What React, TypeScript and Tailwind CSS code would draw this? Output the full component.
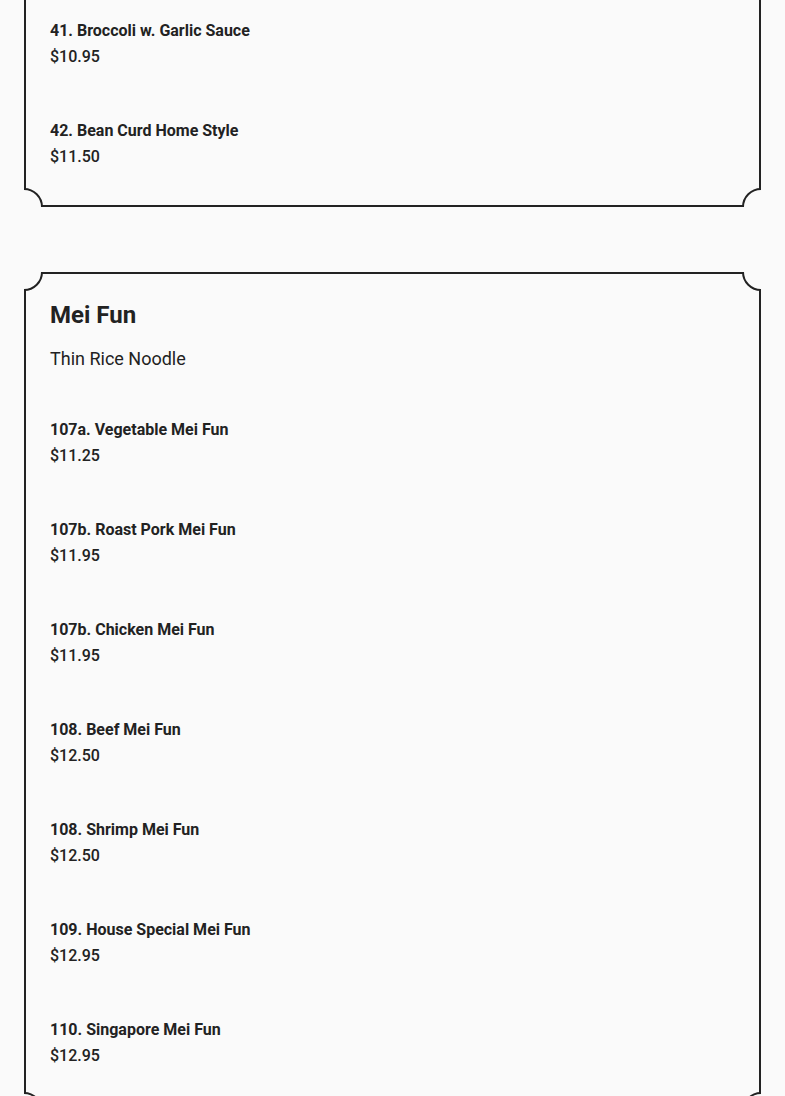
import React from "react";

type Item = { name: string; price: string };

const Corner = ({ pos }: { pos: "tl" | "tr" | "bl" | "br" }) => {
  const cls =
    pos === "tl"
      ? "-left-[19px] -top-[19px]"
      : pos === "tr"
      ? "-right-[19px] -top-[19px]"
      : pos === "bl"
      ? "-left-[19px] -bottom-[19px]"
      : "-right-[19px] -bottom-[19px]";
  return (
    <div
      className={`absolute ${cls} h-[38px] w-[38px] rounded-full border-2 border-[#222222] bg-[#fafafa]`}
    />
  );
};

const ItemRow = ({ item }: { item: Item }) => (
  <div className="flex flex-col">
    <div className="text-[16px] leading-[26px] font-bold text-[#222222]">{item.name}</div>
    <div className="text-[16px] leading-[26px] font-medium text-[#222222]">{item.price}</div>
  </div>
);

const Card = ({
  children,
  className,
}: {
  children: React.ReactNode;
  className?: string;
}) => (
  <div className="relative overflow-hidden">
    <div className={`border-2 border-[#222222] ${className ?? ""}`}>{children}</div>
    <Corner pos="tl" />
    <Corner pos="tr" />
    <Corner pos="bl" />
    <Corner pos="br" />
  </div>
);

const veg: Item[] = [
  { name: "41. Broccoli w. Garlic Sauce", price: "$10.95" },
  { name: "42. Bean Curd Home Style", price: "$11.50" },
];

const meiFun: Item[] = [
  { name: "107a. Vegetable Mei Fun", price: "$11.25" },
  { name: "107b. Roast Pork Mei Fun", price: "$11.95" },
  { name: "107b. Chicken Mei Fun", price: "$11.95" },
  { name: "108. Beef Mei Fun", price: "$12.50" },
  { name: "108. Shrimp Mei Fun", price: "$12.50" },
  { name: "109. House Special Mei Fun", price: "$12.95" },
  { name: "110. Singapore Mei Fun", price: "$12.95" },
];

export default function App() {
  return (
    <div
      className="min-h-[1096px] overflow-hidden bg-[#fafafa] px-6"
      style={{ fontFamily: "Roboto, 'Noto Sans', sans-serif" }}
    >
      <div className="flex flex-col gap-[65px]">
        <div className="-mt-[60px]">
          <Card className="px-6 pt-[76px] pb-[35px]">
            <div className="flex flex-col gap-12">
              {veg.map((it) => (
                <ItemRow key={it.name} item={it} />
              ))}
            </div>
          </Card>
        </div>
        <Card className="px-6 pt-[25px] pb-[40px]">
          <h2 className="text-[24px] leading-[32px] font-bold text-[#222222]">Mei Fun</h2>
          <p className="mt-[14px] text-[18px] leading-[28px] text-[#222222]">Thin Rice Noodle</p>
          <div className="mt-[44px] flex flex-col gap-12">
            {meiFun.map((it, i) => (
              <ItemRow key={it.name + i} item={it} />
            ))}
          </div>
        </Card>
      </div>
    </div>
  );
}
